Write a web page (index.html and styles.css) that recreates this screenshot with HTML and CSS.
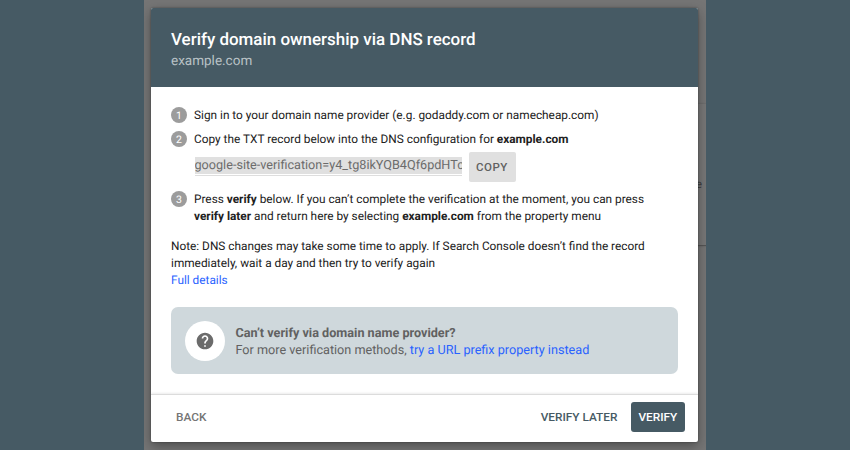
FILE: index.html
```
<!doctype html>
<html lang="en">

<head>
<meta charset="utf-8">
<title>Verify domain ownership</title>
<link rel="stylesheet" href="styles.css">
</head>

<body>

<div class="page">
  <div class="page-card">e</div>

  <div class="dialog">
    <div class="header">
      <h1>Verify domain ownership via DNS record</h1>
      <div class="domain">example.com</div>
    </div>

    <div class="content">
      <div class="step">
        <span class="number">1</span>
        <div>Sign in to your domain name provider (e.g. godaddy.com or namecheap.com)</div>
      </div>
      <div class="step">
        <span class="number">2</span>
        <div>Copy the TXT record below into the DNS configuration for <b>example.com</b></div>
      </div>

      <div class="record">
        <div class="record-field"><div class="record-text">google-site-verification=y4_tg8ikYQB4Qf6pdHTc</div></div>
        <button class="copy">COPY</button>
      </div>

      <div class="step">
        <span class="number">3</span>
        <div>Press <b>verify</b> below. If you can’t complete the verification at the moment, you can press<br>
        <b>verify later</b> and return here by selecting <b>example.com</b> from the property menu</div>
      </div>

      <div class="note">
        Note: DNS changes may take some time to apply. If Search Console doesn’t find the record<br>
        immediately, wait a day and then try to verify again<br>
        <a class="link">Full details</a>
      </div>

      <div class="help">
        <div class="help-icon">
          <svg width="20" height="20" viewBox="0 0 24 24"><path fill="#6b6b6b" d="M12 2C6.480 2 2 6.480 2 12s4.480 10 10 10 10-4.480 10-10S17.520 2 12 2zm1 17h-2v-2h2v2zm2.070-7.750l-.9.920C13.450 12.900 13 13.500 13 15h-2v-.5c0-1.100.450-2.100 1.170-2.830l1.240-1.260c.370-.360.590-.860.590-1.410 0-1.100-.9-2-2-2s-2 .9-2 2H8c0-2.210 1.790-4 4-4s4 1.790 4 4c0 .880-.360 1.680-.930 2.250z"/></svg>
        </div>
        <div class="help-text">
          <b>Can’t verify via domain name provider?</b><br>
          For more verification methods, <a class="link">try a URL prefix property instead</a>
        </div>
      </div>
    </div>

    <div class="footer">
      <button class="back">BACK</button>
      <button class="later">VERIFY LATER</button>
      <button class="verify">VERIFY</button>
    </div>
  </div>
</div>

</body>
</html>
```
FILE: styles.css
```
* {
  box-sizing: border-box;
}

body {
  margin: 0;
  height: 450px;
  overflow: hidden;
  background-color: #465a64;
  font-family: Roboto, sans-serif;
  font-size: 11.83px;
  line-height: 17px;
  color: #212121;
  text-rendering: geometricPrecision;
}

b {
  font-weight: 700;
}

button {
  font: inherit;
  font-weight: 500;
  border: 0;
  padding: 0;
  background: none;
}

.page {
  position: relative;
  width: 562px;
  height: 450px;
  margin-left: 144px;
  padding: 8px 7px;
  overflow: hidden;
  background-color: #757575;
}

/* the dimmed card of the page behind the dialog */
.page-card {
  position: absolute;
  top: 104px;
  right: 0;
  width: 60px;
  height: 142px;
  padding: 72px 4px 0 0;
  border-bottom: 1px solid #555;
  box-shadow: 0 0 2px rgba(0, 0, 0, 0.2);
  background-color: #777;
  color: #3c3c3c;
  text-align: right;
}

.dialog {
  position: relative;
  display: flex;
  flex-direction: column;
  width: 547.4px;
  height: 434px;
  border-radius: 2px;
  overflow: hidden;
  background-color: #fff;
  box-shadow: 0 4px 12px rgba(0, 0, 0, 0.35), 0 0 2px rgba(0, 0, 0, 0.4);
}

.header {
  height: 78.5px;
  padding: 22px 20px 0;
  background-color: #465a64;
}

h1 {
  margin: 0;
  font-size: 16.95px;
  font-weight: 500;
  line-height: 21px;
  color: #fff;
}

.domain {
  font-size: 13.5px;
  line-height: 20px;
  color: #b9c2c6;
}

.content {
  flex: 1;
  padding: 20.5px 20.5px 0 20px;
}

.step {
  display: flex;
  gap: 7px;
  margin-bottom: 6.5px;
}

.number {
  width: 16px;
  height: 16px;
  border-radius: 50%;
  background-color: #9c9c9c;
  color: #fff;
  font-size: 10.5px;
  line-height: 17px;
  text-align: center;
}

.record {
  display: flex;
  gap: 7px;
  height: 30px;
  margin: -2px 0 9px 23.5px;
}

.record-field {
  width: 267px;
  height: 24px;
  padding-top: 5px;
  border-bottom: 1px solid #dedede;
  overflow: hidden;
}

.record-text {
  height: 17px;
  background-color: #e0e0e0;
  color: #6b6b6b;
  font-size: 12.65px;
  line-height: 18px;
  white-space: nowrap;
  overflow: hidden;
}

.copy {
  width: 47px;
  height: 30px;
  border-radius: 2px;
  background-color: #e0e0e0;
  color: #616161;
  font-size: 11.5px;
  letter-spacing: 0.5px;
}

.note {
  margin-top: 13px;
}

.link {
  color: #2962ff;
}

.help {
  display: flex;
  align-items: center;
  gap: 11px;
  height: 67px;
  margin-top: 18px;
  padding-left: 13.5px;
  border-radius: 7px;
  background-color: #cfd8dc;
  color: #616161;
  font-size: 12.65px;
}

.help-icon {
  display: flex;
  align-items: center;
  justify-content: center;
  width: 40px;
  height: 40px;
  border-radius: 50%;
  background-color: #fff;
}

.help-text {
  padding-top: 2px;
}

.footer {
  display: flex;
  align-items: center;
  height: 48px;
  padding: 0 13.5px 3px 25px;
  border-top: 1px solid #dcdcdc;
  box-shadow: 0 -1px 2px rgba(0, 0, 0, 0.08);
}

.back {
  margin-right: auto;
  color: #757575;
}

.later {
  margin-right: 13.5px;
  color: #465a64;
}

.verify {
  width: 54px;
  height: 30px;
  padding-top: 1px;
  border-radius: 3px;
  background-color: #465a64;
  color: #fff;
}
```
